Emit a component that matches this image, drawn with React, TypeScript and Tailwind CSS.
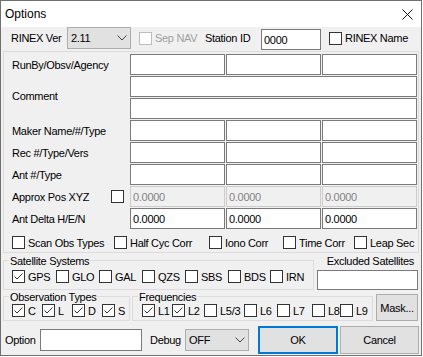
import React from 'react';

// ---------- small controls ----------
type BoxProps = { checked?: boolean; disabled?: boolean };

const Box: React.FC<BoxProps> = ({ checked = false, disabled = false }) => (
  <span
    className={`flex h-[13px] w-[13px] shrink-0 items-center justify-center border bg-white ${
      disabled ? 'border-[#bcbcbc]' : 'border-[#333333]'
    }`}
  >
    {checked && (
      <svg width="11" height="11" viewBox="0 0 11 11">
        <path d="M1.5 5.5L4 8L9.5 2.5" fill="none" stroke="#333333" strokeWidth="1" />
      </svg>
    )}
  </span>
);

type CheckProps = { label: string; checked?: boolean; disabled?: boolean; className?: string };

const Check: React.FC<CheckProps> = ({ label, checked, disabled, className = '' }) => (
  <div className={`flex items-center gap-[3px] ${className}`}>
    <Box checked={checked} disabled={disabled} />
    <span className={disabled ? 'text-[#a0a0a0]' : ''}>{label}</span>
  </div>
);

type FieldProps = { value?: string; disabled?: boolean; className?: string };

const Field: React.FC<FieldProps> = ({ value = '', disabled = false, className = '' }) => (
  <div
    className={`flex shrink-0 items-center border pl-[2px] ${
      disabled ? 'border-[#cccccc] bg-[#f0f0f0] text-[#838383]' : 'border-[#7a7a7a] bg-white'
    } ${className}`}
  >
    {value}
  </div>
);

const Combo: React.FC<{ value: string; className?: string }> = ({ value, className = '' }) => (
  <div
    className={`flex h-[22px] shrink-0 items-center justify-between border border-[#adadad] bg-[#e1e1e1] pl-[3px] pr-[3px] ${className}`}
  >
    <span>{value}</span>
    <svg width="10" height="6" viewBox="0 0 10 6">
      <path d="M0.5 0.5L5 5L9.5 0.5" fill="none" stroke="#444444" strokeWidth="1" />
    </svg>
  </div>
);

const Group: React.FC<{ title: string; className?: string; children: React.ReactNode }> = ({
  title,
  className = '',
  children,
}) => (
  <div className={`shrink-0 border border-[#dcdcdc] ${className}`}>
    <div className="-mt-[7px] ml-[5px] w-fit bg-[#f0f0f0] px-[1px]">{title}</div>
    {children}
  </div>
);

const Row: React.FC<{ label: React.ReactNode; children: React.ReactNode }> = ({ label, children }) => (
  <div className="flex h-[21px] items-center">
    <div className="flex w-[126px] shrink-0 items-center pl-[8px]">{label}</div>
    <div className="flex gap-[1px]">{children}</div>
  </div>
);

const Triple: React.FC<{ value?: string; disabled?: boolean }> = ({ value, disabled }) => (
  <>
    <Field value={value} disabled={disabled} className="h-[21px] w-[95px]" />
    <Field value={value} disabled={disabled} className="h-[21px] w-[95px]" />
    <Field value={value} disabled={disabled} className="h-[21px] w-[95px]" />
  </>
);

// ---------- dialog ----------
export default function App() {
  return (
    <div className="h-[357px] w-[423px] bg-white">
      <div className="flex h-[356px] w-[422px] flex-col border border-[#707070] bg-[#f0f0f0] font-['Liberation_Sans',Arial,sans-serif] text-[11px] leading-[14px] tracking-[-0.3px] text-black">
        {/* title bar */}
        <div className="flex h-[26px] shrink-0 items-center justify-between bg-white pl-[4px] pr-[8px] text-[12px] tracking-normal">
          <span>Options</span>
          <svg width="11" height="11" viewBox="0 0 11 11">
            <path d="M0.5 0.5L10.5 10.5M10.5 0.5L0.5 10.5" stroke="#111111" strokeWidth="1" />
          </svg>
        </div>

        {/* top row */}
        <div className="flex h-[22px] shrink-0 items-center pl-[10px]">
          <span className="w-[56px] shrink-0">RINEX Ver</span>
          <Combo value="2.11" className="w-[64px]" />
          <Check label="Sep NAV" disabled className="ml-[8px] w-[66px] shrink-0" />
          <span className="w-[56px] shrink-0">Station ID</span>
          <Field value="0000" className="mt-[3px] h-[21px] w-[60px]" />
          <Check label="RINEX Name" className="ml-[8px]" />
        </div>

        {/* header fields */}
        <div className="mx-[2px] mt-[2px] shrink-0 border border-[#dcdcdc] pb-[3px] pt-[2px]">
          <div className="flex flex-col gap-[1px]">
            <Row label="RunBy/Obsv/Agency">
              <Triple />
            </Row>
            <div className="flex">
              <div className="w-[126px] shrink-0 pl-[8px]">
                <span className="mt-[13px] block">Comment</span>
              </div>
              <div className="flex flex-col gap-[1px]">
                <Field className="h-[21px] w-[287px]" />
                <Field className="h-[21px] w-[287px]" />
              </div>
            </div>
            <Row label="Maker Name/#/Type">
              <Triple />
            </Row>
            <Row label="Rec #/Type/Vers">
              <Triple />
            </Row>
            <Row label="Ant #/Type">
              <Triple />
            </Row>
            <Row
              label={
                <>
                  <span className="w-[99px] shrink-0">Approx Pos XYZ</span>
                  <Box />
                </>
              }
            >
              <Triple value="0.0000" disabled />
            </Row>
            <Row label="Ant Delta H/E/N">
              <Triple value="0.0000" />
            </Row>
          </div>
          <div className="mt-[7px] flex h-[13px] items-center pl-[8px]">
            <Check label="Scan Obs Types" className="w-[102px] shrink-0" />
            <Check label="Half Cyc Corr" className="w-[95px] shrink-0" />
            <Check label="Iono Corr" className="w-[74px] shrink-0" />
            <Check label="Time Corr" className="w-[71px] shrink-0" />
            <Check label="Leap Sec" />
          </div>
        </div>

        {/* satellite systems / excluded */}
        <div className="mx-[2px] flex shrink-0 items-start">
          <Group title="Satellite Systems" className="mt-[7px] w-[311px] pb-[6px]">
            <div className="mt-[2px] flex h-[13px] items-center pl-[8px]">
              <Check label="GPS" checked className="w-[44px] shrink-0" />
              <Check label="GLO" className="w-[43px] shrink-0" />
              <Check label="GAL" className="w-[43px] shrink-0" />
              <Check label="QZS" className="w-[43px] shrink-0" />
              <Check label="SBS" className="w-[43px] shrink-0" />
              <Check label="BDS" className="w-[42px] shrink-0" />
              <Check label="IRN" />
            </div>
          </Group>
          <div className="ml-[3px] w-[101px] shrink-0">
            <div className="h-[16px] pr-[4px] text-right leading-[16px]">Excluded Satellites</div>
            <Field className="mt-[1px] h-[20px] w-[101px]" />
          </div>
        </div>

        {/* observation types / frequencies / mask */}
        <div className="mx-[2px] flex shrink-0 items-start">
          <Group title="Observation Types" className="mt-[6px] w-[127px] pb-[3px]">
            <div className="flex h-[13px] items-center pl-[8px]">
              <Check label="C" checked className="w-[30px] shrink-0" />
              <Check label="L" checked className="w-[30px] shrink-0" />
              <Check label="D" checked className="w-[30px] shrink-0" />
              <Check label="S" checked />
            </div>
          </Group>
          <Group title="Frequencies" className="ml-[2px] mt-[6px] w-[241px] pb-[3px]">
            <div className="flex h-[13px] items-center pl-[9px]">
              <Check label="L1" checked className="w-[30px] shrink-0" />
              <Check label="L2" checked className="w-[32px] shrink-0" />
              <Check label="L5/3" className="w-[40px] shrink-0" />
              <Check label="L6" className="w-[33px] shrink-0" />
              <Check label="L7" className="w-[35px] shrink-0" />
              <Check label="L8" className="w-[28px] shrink-0" />
              <Check label="L9" />
            </div>
          </Group>
          <button className="ml-[3px] mt-[4px] h-[27px] w-[42px] shrink-0 border border-[#adadad] bg-[#e1e1e1]">
            Mask...
          </button>
        </div>

        {/* bottom row */}
        <div className="mt-[5px] flex h-[28px] shrink-0 items-center pl-[4px]">
          <span className="w-[35px] shrink-0">Option</span>
          <Field className="h-[22px] w-[102px]" />
          <span className="ml-[8px] w-[35px] shrink-0">Debug</span>
          <Combo value="OFF" className="w-[64px]" />
          <button className="ml-[9px] h-[28px] w-[80px] shrink-0 border-2 border-[#0078d7] bg-[#e1e1e1]">OK</button>
          <button className="ml-[2px] h-[28px] w-[79px] shrink-0 border border-[#adadad] bg-[#e1e1e1]">
            Cancel
          </button>
        </div>
      </div>
    </div>
  );
}
